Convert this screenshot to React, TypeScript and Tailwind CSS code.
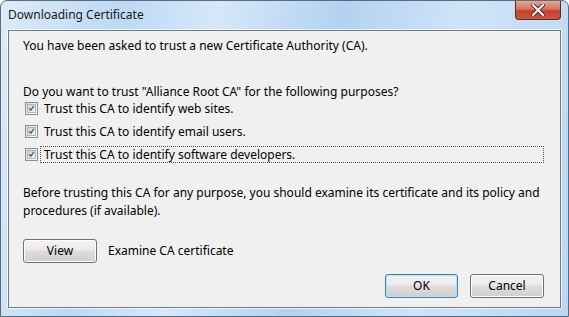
import React from "react";

const Checkbox = () => {
  return (
    <div className="w-[13px] h-[13px] border border-[#8e8f8f] bg-gradient-to-br from-[#dcdcdc] to-[#fbfbfb] flex items-center justify-center shrink-0">
      <div className="w-[9px] h-[9px] border border-[#b4b4b4] bg-gradient-to-br from-[#cfd3d8] to-[#f4f6f7] flex items-center justify-center">
        <svg width="9" height="9" viewBox="0 0 9 9">
          <path d="M1.5 4.2 L3.6 6.6 L7.6 1.2" fill="none" stroke="#3d5a97" strokeWidth="1.7" />
        </svg>
      </div>
    </div>
  );
};

const Button = ({ label, isDefault, className }: { label: string; isDefault?: boolean; className?: string }) => {
  return (
    <div
      className={`h-[24px] rounded-[3px] border ${
        isDefault ? "border-[#3c7fb1] shadow-[inset_0_0_0_1px_#b7e4f8]" : "border-[#707070] shadow-[inset_0_0_0_1px_#fcfcfc]"
      } bg-[linear-gradient(#f2f2f2_0%,#ebebeb_45%,#dddddd_50%,#cfcfcf_100%)] flex items-center justify-center text-black ${className ?? ""}`}
    >
      {label}
    </div>
  );
};

const purposes = [
  "Trust this CA to identify web sites.",
  "Trust this CA to identify email users.",
  "Trust this CA to identify software developers.",
];

export default function App() {
  return (
    <div className="w-[569px] h-[317px] rounded-t-[7px] border border-[#5a6b7c] bg-[linear-gradient(100deg,#dcebf8_0%,#bcd9f5_20%,#d6e8f9_35%,#b3d2f1_55%,#cfe4f8_75%,#b9d7f4_100%)] flex flex-col text-[12px] text-black font-['Noto_Sans',sans-serif]">
      <div className="h-[28px] flex items-start justify-between">
        <div className="pl-[7px] pt-[5px] leading-[18px] text-[#1a1a1a]">Downloading Certificate</div>
        <div className="mr-[7px] w-[46px] h-[19px] rounded-b-[4px] border border-t-0 border-[#5e2b24] bg-[linear-gradient(#e8a594_0%,#d7735e_45%,#c4412a_55%,#d0563b_100%)] flex items-center justify-center">
          <svg width="14" height="12" viewBox="0 0 14 12">
            <path d="M2 1 L12 11 M12 1 L2 11" stroke="#4b2a28" strokeWidth="4" strokeLinecap="square" />
            <path d="M2 1 L12 11 M12 1 L2 11" stroke="#ffffff" strokeWidth="2" strokeLinecap="square" />
          </svg>
        </div>
      </div>
      <div className="mx-[6px] flex-1 border border-white/70 rounded-[1px]">
        <div className="h-full border border-[#6d7b8a] bg-[#f0f0f0] flex flex-col pl-[14px] pr-[16px]">
          <div className="mt-[7px] h-[16px] leading-[16px]">
            You have been asked to trust a new Certificate Authority (CA).
          </div>
          <div className="mt-[30px] h-[16px] leading-[16px]">
            Do you want to trust "Alliance Root CA" for the following purposes?
          </div>
          <div className="flex flex-col gap-[6px]">
            {purposes.map((p, i) => (
              <div key={i} className="h-[17px] flex items-center pl-[2px]">
                <Checkbox />
                <div
                  className={`ml-[2px] flex-1 h-[17px] leading-[15px] pl-[3px] border border-dotted ${
                    i === 2 ? "border-[#555555]" : "border-transparent"
                  }`}
                >
                  {p}
                </div>
              </div>
            ))}
          </div>
          <div className="mt-[21px] leading-[18px]">
            Before trusting this CA for any purpose, you should examine its certificate and its policy and procedures (if
            available).
          </div>
          <div className="mt-[19px] flex items-center gap-[11px]">
            <Button label="View" className="w-[74px] h-[23px]" />
            <div>Examine CA certificate</div>
          </div>
          <div className="mt-[11px] flex justify-end gap-[12px]">
            <Button label="OK" isDefault className="w-[73px]" />
            <Button label="Cancel" className="w-[74px]" />
          </div>
        </div>
      </div>
      <div className="h-[7px]" />
    </div>
  );
}
